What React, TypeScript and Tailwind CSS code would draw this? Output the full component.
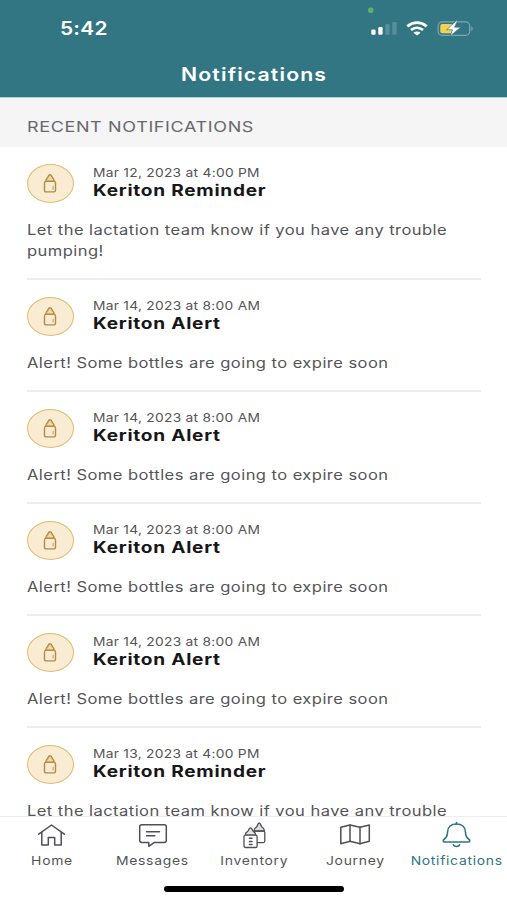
import type { ReactNode } from "react";
import clsx from "clsx";

const notifications = [
  { id: 1, date: "Mar 12, 2023 at 4:00 PM", title: "Keriton Reminder", body: "Let the lactation team know if you have any trouble pumping!" },
  { id: 2, date: "Mar 14, 2023 at 8:00 AM", title: "Keriton Alert", body: "Alert! Some bottles are going to expire soon" },
  { id: 3, date: "Mar 14, 2023 at 8:00 AM", title: "Keriton Alert", body: "Alert! Some bottles are going to expire soon" },
  { id: 4, date: "Mar 14, 2023 at 8:00 AM", title: "Keriton Alert", body: "Alert! Some bottles are going to expire soon" },
  { id: 5, date: "Mar 14, 2023 at 8:00 AM", title: "Keriton Alert", body: "Alert! Some bottles are going to expire soon" },
  { id: 6, date: "Mar 13, 2023 at 4:00 PM", title: "Keriton Reminder", body: "Let the lactation team know if you have any trouble pumping!" },
];

function StatusIcons() {
  return (
    <svg className="h-[36px] w-[107px]" viewBox="0 0 107 36" fill="none">
      <circle cx="2.7" cy="5.2" r="2.8" fill="#5bb26a" />
      <rect x="3.3" y="24.5" width="4.3" height="5.3" rx="1.2" fill="#fff" />
      <rect x="10.3" y="22" width="4.3" height="7.8" rx="1.2" fill="#fff" />
      <rect x="17.3" y="19" width="4.3" height="10.8" rx="1.2" fill="#578f9b" />
      <rect x="24.3" y="17" width="4.3" height="12.8" rx="1.2" fill="#578f9b" />
      <path d="M39.3 21.3c5.8-4.8 13.6-4.8 19.4 0" stroke="#fff" strokeWidth="2.8" />
      <path d="M43 25.1c3.6-3 8.4-3 12 0" stroke="#fff" strokeWidth="2.6" />
      <path d="M45.5 27.7c2.1-1.7 4.9-1.7 7 0L49 30.4z" fill="#fff" />
      <rect x="70.1" y="16.9" width="31.6" height="13.4" rx="4" stroke="#7ca9b1" strokeWidth="1.2" />
      <path d="M103.3 21.3v4.6c1.8-.6 1.8-4 0-4.6z" fill="#7ca9b1" />
      <rect x="72.3" y="19.1" width="12.7" height="9.2" rx="2" fill="#f6d34e" />
      <path d="M88.3 15.8 78.5 24.8h6L82.2 31 92.8 22.2h-6.2l2.9-6.4z" fill="#fff" stroke="#337683" strokeWidth=".7" strokeLinejoin="round" />
    </svg>
  );
}

function BottleIcon() {
  return (
    <svg className="-mt-px mr-px h-[20px] w-[14px]" viewBox="0 0 14 20" fill="none" stroke="#b08b43" strokeWidth="1.4" strokeLinecap="round" strokeLinejoin="round">
      <path d="M2.9 8.2C2.9 6.4 3.6 5.4 4.6 4.5 5.4 3.800 5.400 1.700 7 1.700s1.600 2.100 2.400 2.800c1 .9 1.700 1.900 1.700 3.700" fill="#f0d7a4" />
      <path d="M2.900 8.200h8.200c.9.300 1.400 1 1.400 1.800v7.600c0 .8-.5 1.300-1.300 1.300H2.800c-.8 0-1.300-.5-1.300-1.300V10c0-.8.5-1.500 1.400-1.800z" />
      <path d="M10.100 13.200v3" strokeWidth=".8" />
    </svg>
  );
}

function HomeIcon() {
  return (
    <svg className="h-[28px] w-[30px]" viewBox="0 0 30 28" fill="none" stroke="#505054" strokeWidth="1.5" strokeLinecap="round" strokeLinejoin="round">
      <path d="M1.7 13.2 14.5 4l12.8 9.2" />
      <path d="M4.8 11.4V24h6.5v-7.4h6.4V24h6.5V11.4" />
    </svg>
  );
}

function MessagesIcon() {
  return (
    <svg className="h-[28px] w-[30px]" viewBox="0 0 30 28" fill="none" stroke="#505054" strokeWidth="1.5" strokeLinecap="round" strokeLinejoin="round">
      <path d="M3.8 3.8h22.4c1.2 0 2.1.8 2.1 1.8v14c0 1-.9 1.8-2.1 1.8H16.4l-5.6 3.9v-3.9h-7c-1.2 0-2.1-.8-2.1-1.8v-14c0-1 .9-1.8 2.1-1.8z" />
      <path d="M8.5 10.7h13M8.5 14.8h8.3" />
    </svg>
  );
}

function InventoryIcon() {
  return (
    <svg className="h-[28px] w-[30px]" viewBox="0 0 30 28" fill="none" stroke="#505054" strokeWidth="1.3" strokeLinecap="round" strokeLinejoin="round">
      <path d="M15 10c0-2 .9-3.100 2.400-4 1.100-.6 1.100-4 2.800-4s1.700 3.400 2.800 4c1.500.9 2.400 2 2.400 4z" fill="#dcdcde" />
      <path d="M14.500 10.200h10c.8 0 1.300.5 1.300 1.300v8.600c0 .9-.5 1.500-1.400 1.500h-6" />
      <path d="M6.300 14.200c0-2 .9-3 2.400-3.800 1.100-.6 1.100-3.600 2.800-3.600s1.700 3 2.800 3.600c1.500.8 2.400 1.800 2.400 3.800z" fill="#e4e4e6" />
      <path d="M6.400 14.200h10.300c.9 0 1.400.6 1.400 1.400v9.300c0 1-.6 1.600-1.600 1.600H6.600c-1 0-1.600-.6-1.600-1.600v-9.300c0-.8.500-1.400 1.400-1.400z" fill="#fff" />
      <path d="M10.400 17.300h2.600M10.400 20.400h2.600M10.400 23.500h2.600" strokeWidth="1.5" />
    </svg>
  );
}

function JourneyIcon() {
  return (
    <svg className="h-[28px] w-[32px]" viewBox="0 0 32 28" fill="none" stroke="#505054" strokeWidth="1.5" strokeLinecap="round" strokeLinejoin="round">
      <path d="m1.8 6.3 9.2-2.4 10 2.4 9.3-2.4v16.4L21 22.7l-10-2.4-9.2 2.4z" />
      <path d="M11 3.9v16.4M21 6.3v16.4" />
    </svg>
  );
}

function BellIcon() {
  return (
    <svg className="h-[28px] w-[30px]" viewBox="0 0 30 28" fill="none" stroke="#337683" strokeWidth="1.6" strokeLinecap="round" strokeLinejoin="round">
      <path d="M15.500 1.500V3" />
      <path d="M3.700 21c-1.700 0-1.900-1.700-.8-2.500 2.600-1.600 3.600-4 3.600-7.200C6.500 6 10.300 3 15.500 3s9 3 9 8.300c0 3.200 1 5.600 3.600 7.200 1.100.8.900 2.500-.8 2.500z" />
      <path d="M12.300 23.800c.8 2.200 5.600 2.200 6.400 0" />
    </svg>
  );
}

const tabs: { label: string; icon: ReactNode; active?: boolean }[] = [
  { label: "Home", icon: <HomeIcon /> },
  { label: "Messages", icon: <MessagesIcon /> },
  { label: "Inventory", icon: <InventoryIcon /> },
  { label: "Journey", icon: <JourneyIcon /> },
  { label: "Notifications", icon: <BellIcon />, active: true },
];

export default function App() {
  return (
    <div className="flex h-[900px] w-[507px] flex-col overflow-hidden bg-white font-['Inter',sans-serif]">
      <header className="h-[98px] shrink-0 border-b border-[#a9d3dc] bg-[#337683] text-white">
        <div className="flex h-[58px] items-start justify-between pr-[32px] pl-[60px]">
          <span className="mt-[17px] origin-left scale-x-110 text-[19px] leading-6 font-semibold tracking-[0.2px]">5:42</span>
          <div className="mt-[5px]">
            <StatusIcons />
          </div>
        </div>
        <h1 className="scale-x-118 pl-px text-center text-[18px] leading-[34px] font-semibold tracking-[0.95px]">Notifications</h1>
      </header>

      <h2 className="h-[49px] shrink-0 bg-[#f5f5f6] pl-[27px] text-[15px] leading-[58px] text-[#68686b]">
        <span className="inline-block origin-left scale-x-120 tracking-[0.53px]">RECENT NOTIFICATIONS</span>
      </h2>

      <main className="min-h-0 flex-1 overflow-hidden">
        {notifications.map((item) => (
          <article key={item.id} className="px-[26px]">
            <div className="flex pt-[17px]">
              <div className="ml-px flex h-[39px] w-[47px] items-center justify-center rounded-[50%] border-[1.5px] border-[#e0bd6c] bg-[#faebd3]">
                <BottleIcon />
              </div>
              <div className="ml-[19px] whitespace-nowrap">
                <p className="origin-left scale-x-115 text-[12px] leading-[17px] tracking-[0.23px] text-[#545457]">{item.date}</p>
                <h3 className="origin-left scale-x-123 text-[15.5px] leading-[20px] font-bold tracking-[0.6px] text-[#171719]">{item.title}</h3>
              </div>
            </div>
            <p className="mt-[16px] mb-[18px] ml-px w-[380px] origin-left scale-x-118 text-[14px] leading-[21px] tracking-[0.38px] text-[#545457]">{item.body}</p>
            <div className="-mt-px ml-px h-[2px] bg-[#eeeeef]" />
          </article>
        ))}
      </main>

      <nav className="flex h-[84px] shrink-0 flex-col items-center border-t border-[#ededee]">
        <div className="grid w-full grid-cols-5 pl-px">
          {tabs.map((tab) => (
            <button key={tab.label} className="flex flex-col items-center pt-[4px]">
              {tab.icon}
              <span className={clsx("mt-[3px] scale-x-116 text-[12px] leading-[18px] tracking-[0.6px]", tab.active ? "text-[#337683]" : "text-[#545457]")}>{tab.label}</span>
            </button>
          ))}
        </div>
        <div className="mt-[16px] h-[6px] w-[180px] rounded-full bg-black" />
      </nav>
    </div>
  );
}
